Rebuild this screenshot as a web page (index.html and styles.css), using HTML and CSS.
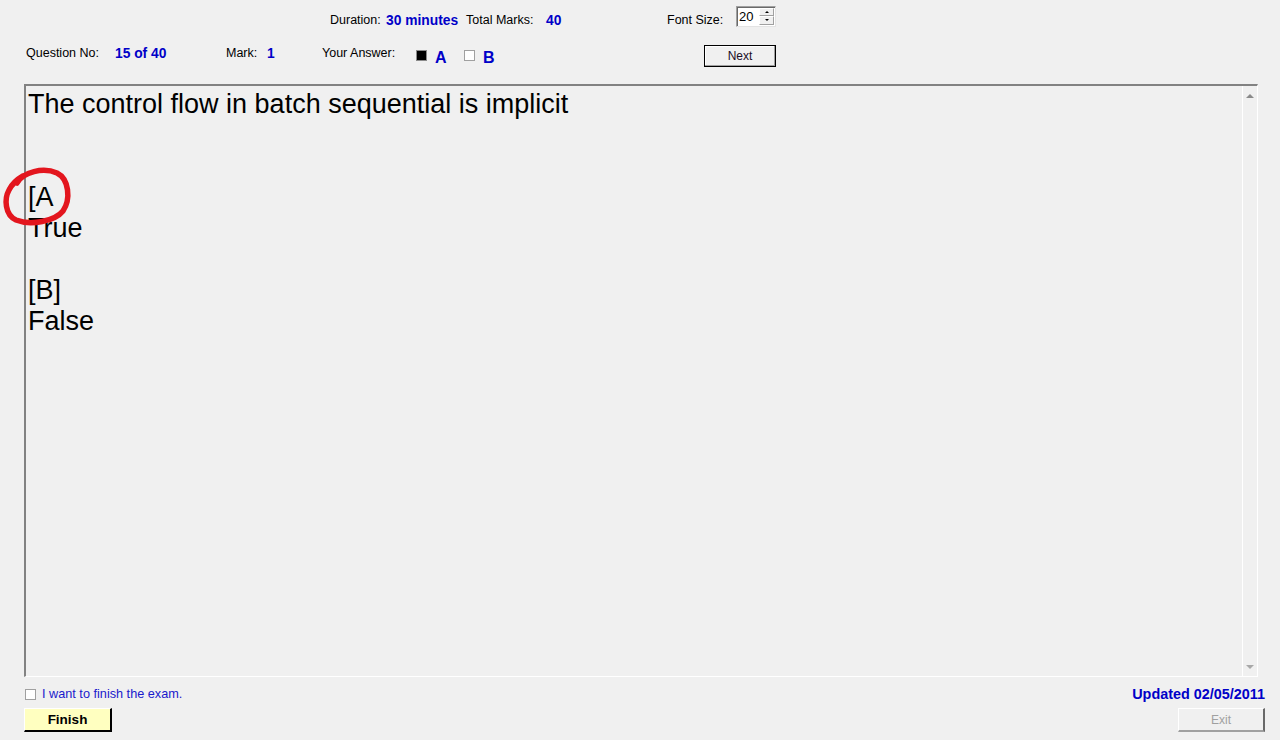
FILE: index.html
```html
<!DOCTYPE html>
<html>
<head>
<meta charset="utf-8">
<title>Exam</title>
<link rel="stylesheet" href="styles.css">
</head>
<body>
<div class="app">
  <div class="row row1">
    <span class="cell w56">Duration:</span>
    <span class="cell w80 val">30 minutes</span>
    <span class="cell w80">Total Marks:</span>
    <span class="cell w121 val">40</span>
    <span class="cell w69">Font Size:</span>
    <span class="spin">
      <span class="spin-val">20</span>
      <span class="spin-btns">
        <span class="spin-btn"><span class="arr-up"></span></span>
        <span class="spin-btn"><span class="arr-down"></span></span>
      </span>
    </span>
  </div>
  <div class="row row2">
    <span class="cell w89">Question No:</span>
    <span class="cell w111 val">15 of 40</span>
    <span class="cell w41">Mark:</span>
    <span class="cell w55 val">1</span>
    <span class="cell w94">Your Answer:</span>
    <span class="opt"><span class="cb cb-on"></span><span class="opt-l">A</span></span>
    <span class="opt"><span class="cb"></span><span class="opt-l">B</span></span>
    <span class="next-wrap"><button class="btn next">Next</button></span>
  </div>
  <div class="qbox">
    <div class="qtext">
      <div class="ln">The control flow in batch sequential is implicit</div>
      <div class="ln">&nbsp;</div>
      <div class="ln">&nbsp;</div>
      <div class="ln">[A</div>
      <div class="ln">True</div>
      <div class="ln">&nbsp;</div>
      <div class="ln">[B]</div>
      <div class="ln">False</div>
    </div>
    <div class="sbar">
      <span class="sarr-up"></span>
      <span class="sarr-down"></span>
    </div>
  </div>
  <div class="foot1">
    <label class="fin-check"><span class="cb small"></span><span class="fin-text">I want to finish the exam.</span></label>
    <span class="updated">Updated 02/05/2011</span>
  </div>
  <div class="foot2">
    <button class="btn finish">Finish</button>
    <button class="btn exit">Exit</button>
  </div>
  <svg class="mark" width="80" height="70" viewBox="0 160 80 70">
    <path d="M17,183 C23,172 43,167 57,173 C69,179 71,199 63,211 C55,221 31,226 16,220 C5,215 4,199 9,190 C12,184 16,180 23,176" fill="none" stroke="#e3161e" stroke-width="5.5" stroke-linecap="round"/>
  </svg>
</div>
</body>
</html>
```
FILE: styles.css
```css
* { box-sizing: border-box; }
html, body {
  margin: 0;
  padding: 0;
  background: #f0f0f0;
}
body {
  font-family: "Liberation Sans", Arial, sans-serif;
  font-size: 12.5px;
  color: #000;
}
.app {
  position: relative;
  width: 1280px;
  height: 740px;
  overflow: hidden;
}
.row {
  display: flex;
  align-items: center;
}
.row1 {
  height: 40px;
  padding-left: 330px;
}
.row2 {
  height: 32px;
  padding-left: 26px;
}
.cell { display: inline-block; white-space: nowrap; }
.row2 .cell { margin-bottom: 6px; }
.val { color: #0000c8; font-weight: bold; font-size: 13.8px; }
.w56 { width: 56px; }
.w80 { width: 80px; }
.w121 { width: 121px; }
.w69 { width: 69px; }
.w89 { width: 89px; }
.w111 { width: 111px; }
.w41 { width: 41px; }
.w55 { width: 55px; }
.w94 { width: 94px; }

.spin {
  display: flex;
  width: 40px;
  height: 21px;
  margin-top: -8px;
  background: #fff;
  border-top: 1px solid #a0a0a0;
  border-left: 1px solid #a0a0a0;
  border-right: 1px solid #e3e3e3;
  border-bottom: 1px solid #e3e3e3;
  box-shadow: inset 1px 1px 0 #696969;
}
.spin-val {
  flex: 1;
  padding-left: 2px;
  line-height: 19px;
  font-size: 13px;
}
.spin-btns {
  display: flex;
  flex-direction: column;
  width: 16px;
  padding: 1px 1px 1px 0;
}
.spin-btn {
  flex: 1;
  display: flex;
  align-items: center;
  justify-content: center;
  background: #f0f0f0;
  border-top: 1px solid #fff;
  border-left: 1px solid #fff;
  border-right: 1px solid #a0a0a0;
  border-bottom: 1px solid #a0a0a0;
}
.arr-up {
  width: 0; height: 0;
  border-left: 2px solid transparent;
  border-right: 2px solid transparent;
  border-bottom: 2px solid #000;
}
.arr-down {
  width: 0; height: 0;
  border-left: 2px solid transparent;
  border-right: 2px solid transparent;
  border-top: 2px solid #000;
}

.opt {
  display: flex;
  align-items: center;
  width: 48px;
  padding-top: 4px;
}
.cb {
  display: inline-block;
  width: 11px;
  height: 11px;
  background: #fff;
  border: 1px solid #a0a0a0;
  margin-top: -5px;
}
.cb-on {
  background: #000;
  border: 1px solid #8a8a8a;
}
.opt-l {
  margin-left: 8px;
  color: #0000c8;
  font-weight: bold;
  font-size: 16px;
}
.next-wrap {
  margin-left: 192px;
}
.btn {
  font-family: "Liberation Sans", Arial, sans-serif;
  font-size: 12px;
  padding: 0;
  margin: 0;
  cursor: default;
}
.next {
  width: 72px;
  height: 22px;
  background: #f0f0f0;
  border: 1px solid #000;
  box-shadow: inset -1px -1px 0 #a0a0a0, inset 1px 1px 0 #fff;
  color: #1a0d26;
}

.qbox {
  display: flex;
  margin-left: 24px;
  margin-top: 12px;
  width: 1234px;
  height: 593px;
  border-top: 2px solid #828282;
  border-left: 2px solid #828282;
  border-right: 1px solid #fff;
  border-bottom: 1px solid #fff;
}
.qtext {
  flex: 1;
  padding: 3px 0 0 2px;
  font-size: 27px;
  line-height: 31px;
}
.sbar {
  width: 15px;
  border-left: 1px solid #fff;
  background: #f0f0f0;
  display: flex;
  flex-direction: column;
  justify-content: space-between;
  align-items: center;
  padding: 8px 0 7px;
}
.sarr-up {
  width: 0; height: 0;
  border-left: 4px solid transparent;
  border-right: 4px solid transparent;
  border-bottom: 4px solid #8a8a8a;
}
.sarr-down {
  width: 0; height: 0;
  border-left: 4px solid transparent;
  border-right: 4px solid transparent;
  border-top: 4px solid #a8a8a8;
}

.foot1 {
  display: flex;
  justify-content: space-between;
  align-items: center;
  height: 28px;
  padding: 6px 15px 0 25px;
}
.fin-check {
  display: flex;
  align-items: center;
}
.cb.small {
  margin-top: 0;
  width: 11px;
  height: 11px;
}
.fin-text {
  margin-left: 6px;
  color: #1a1acc;
  font-size: 12.7px;
}
.updated {
  color: #0000c8;
  font-weight: bold;
  font-size: 14.4px;
}
.foot2 {
  display: flex;
  justify-content: space-between;
  padding: 3px 15px 0 24px;
}
.finish {
  width: 88px;
  height: 24px;
  background: #ffffc0;
  border-top: 1px solid #fff;
  border-left: 1px solid #fff;
  border-right: 2px solid #000;
  border-bottom: 2px solid #000;
  font-weight: bold;
  font-size: 13.5px;
  color: #000;
}
.exit {
  width: 87px;
  height: 24px;
  background: #f0f0f0;
  border-top: 1px solid #fff;
  border-left: 1px solid #fff;
  border-right: 2px solid #696969;
  border-bottom: 2px solid #a0a0a0;
  color: #a0a0a0;
  font-size: 12px;
}
.mark {
  position: absolute;
  left: 0;
  top: 160px;
}
```
